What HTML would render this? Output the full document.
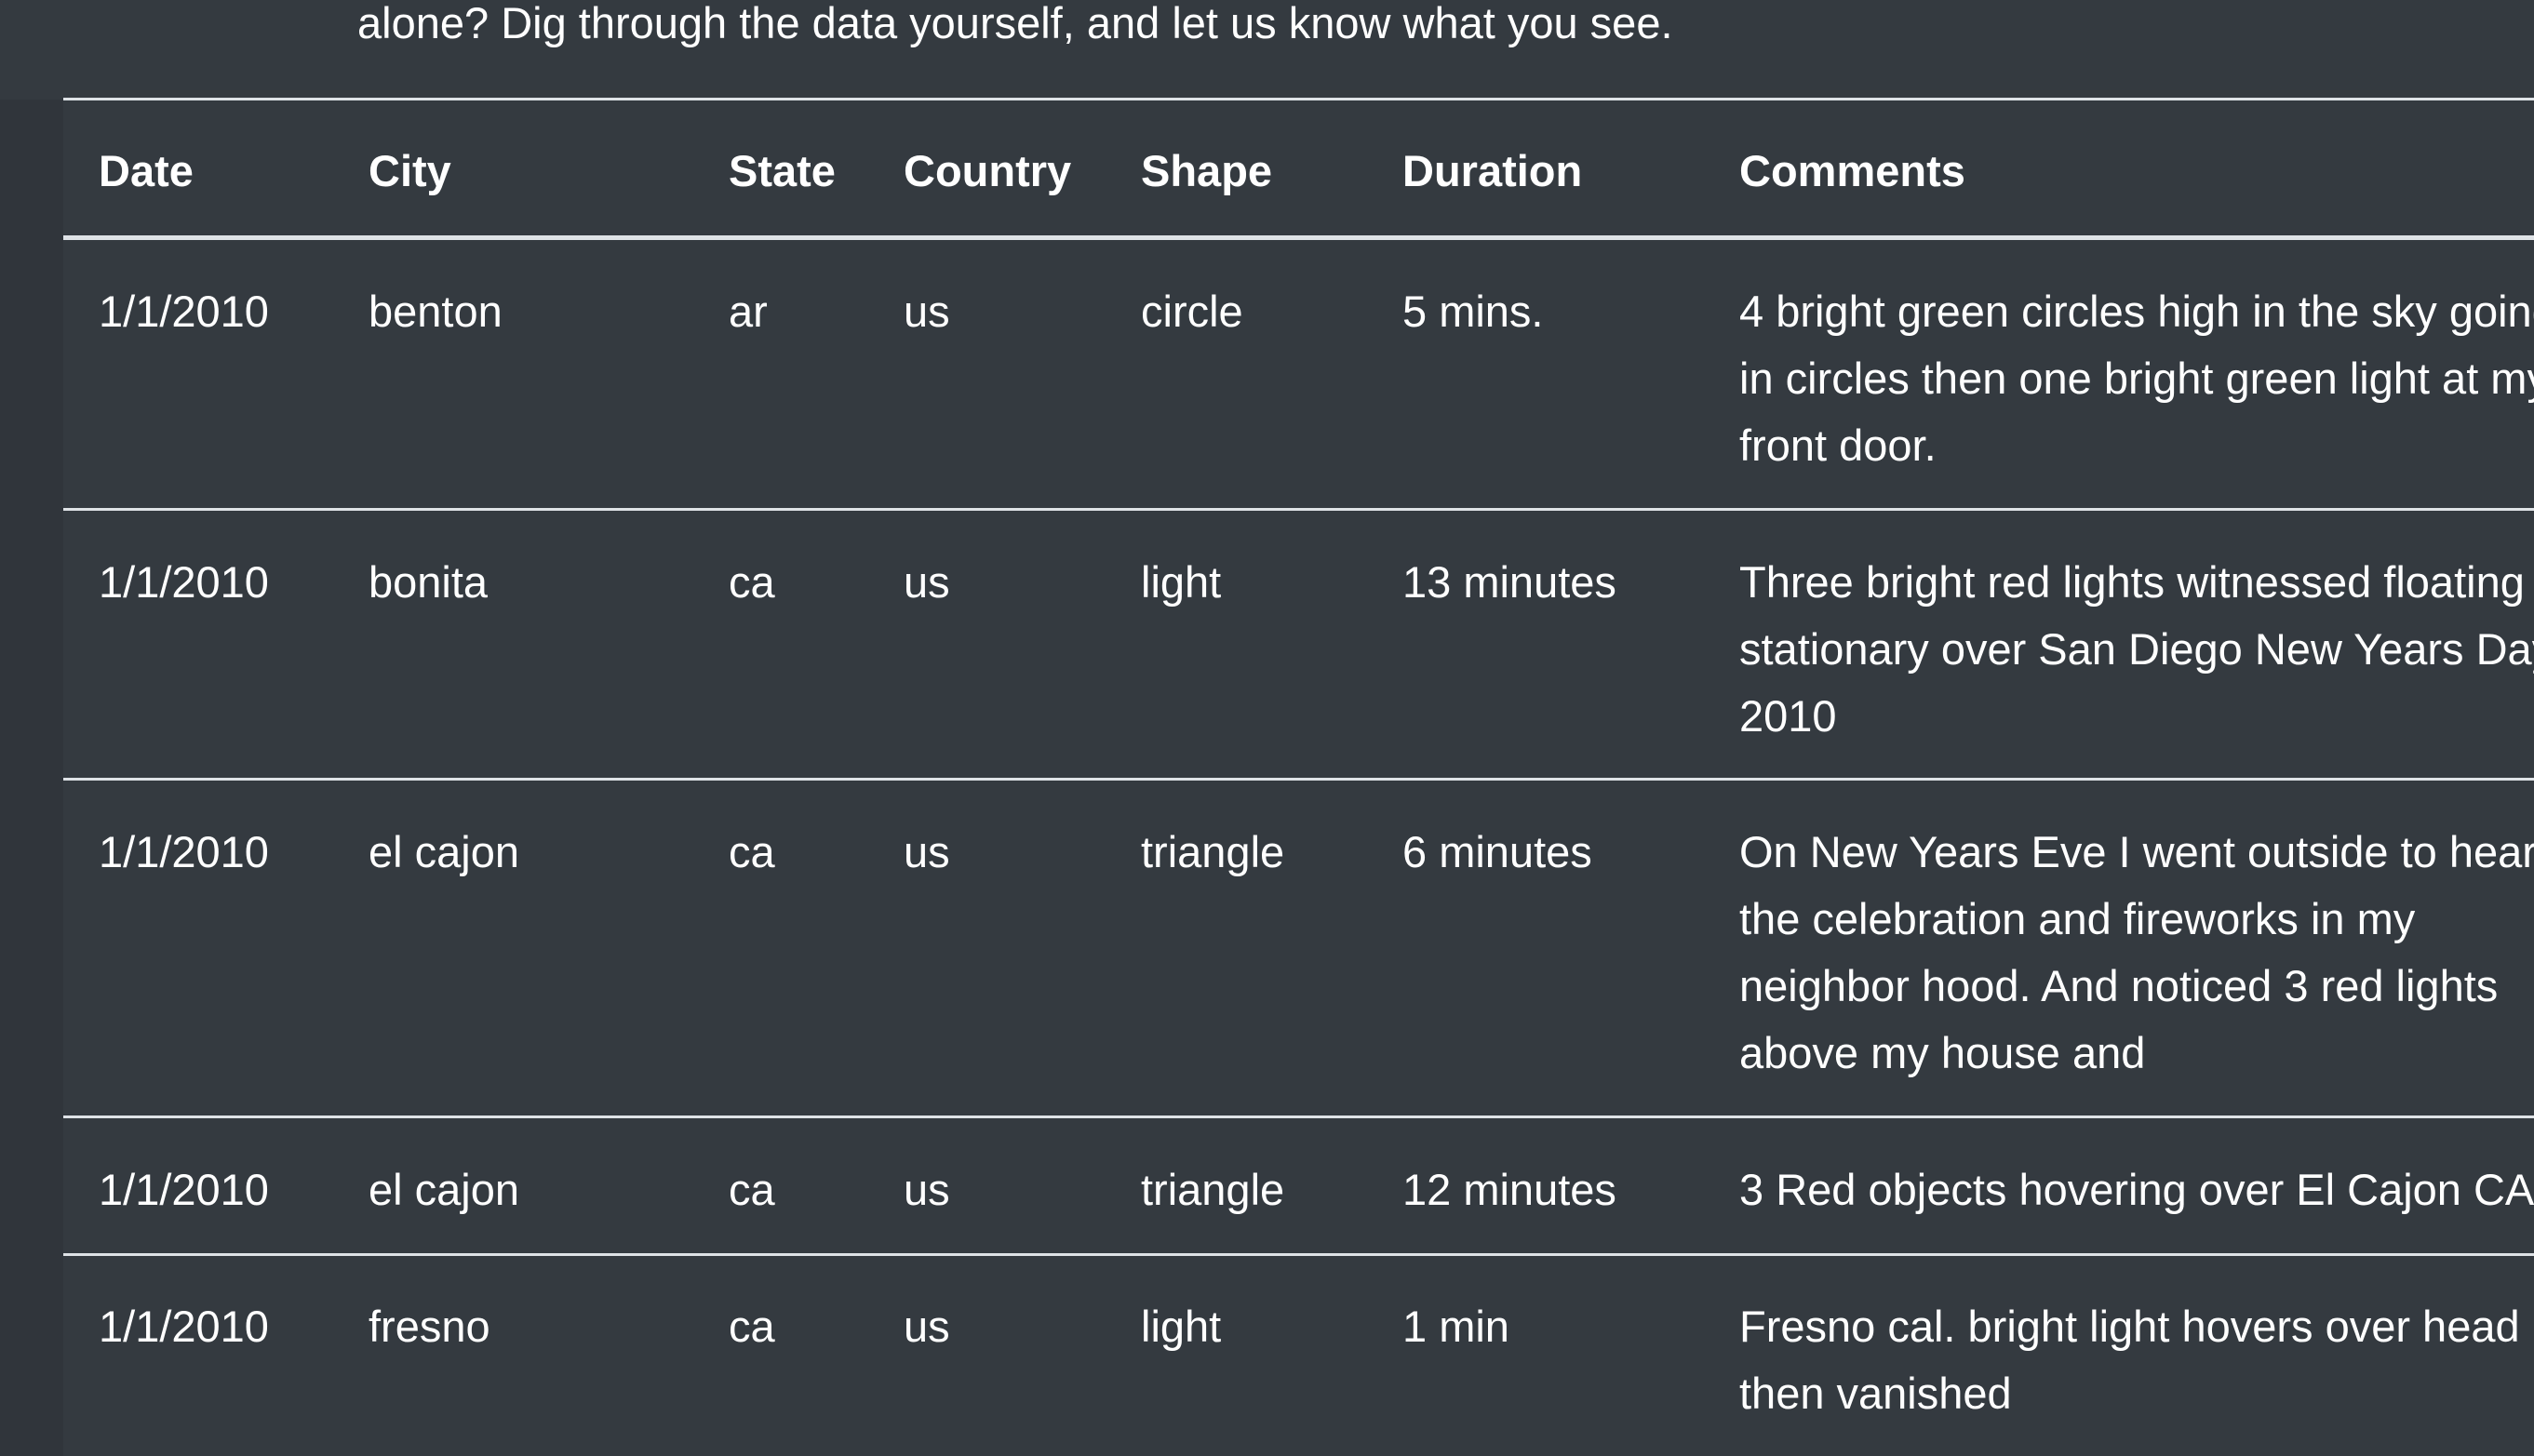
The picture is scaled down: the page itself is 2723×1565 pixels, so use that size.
<!DOCTYPE html>
<html><head><meta charset="utf-8"><style>
html,body{margin:0;padding:0}
body{width:2723px;height:1565px;overflow:hidden;background:#343a40;position:relative;font-family:"Liberation Sans",sans-serif;color:#fff;font-size:47px;line-height:72px}
.left{position:absolute;left:0;top:107px;width:68px;bottom:0;background:#30353b}
.ln{position:absolute;left:68px;right:0;height:3px;background:#dee2e6}
.t{position:absolute;white-space:nowrap}
.b{font-weight:bold}
</style></head><body>
<div class="left"></div>
<div class="t" style="left:384px;top:-11px">alone? Dig through the data yourself, and let us know what you see.</div>
<div class="ln" style="top:105px"></div>
<div class="ln" style="top:253px;height:5px"></div>
<div class="ln" style="top:546px"></div>
<div class="ln" style="top:836px"></div>
<div class="ln" style="top:1199px"></div>
<div class="ln" style="top:1347px"></div>

<div class="t b" style="top:148px;left:106px">Date</div>
<div class="t b" style="top:148px;left:396px">City</div>
<div class="t b" style="top:148px;left:783px">State</div>
<div class="t b" style="top:148px;left:971px">Country</div>
<div class="t b" style="top:148px;left:1226px">Shape</div>
<div class="t b" style="top:148px;left:1507px">Duration</div>
<div class="t b" style="top:148px;left:1869px">Comments</div>

<div class="t" style="top:299px;left:106px">1/1/2010</div>
<div class="t" style="top:299px;left:396px">benton</div>
<div class="t" style="top:299px;left:783px">ar</div>
<div class="t" style="top:299px;left:971px">us</div>
<div class="t" style="top:299px;left:1226px">circle</div>
<div class="t" style="top:299px;left:1507px">5 mins.</div>
<div class="t" style="top:299px;left:1869px">4 bright green circles high in the sky going<br>in circles then one bright green light at my<br>front door.</div>

<div class="t" style="top:590px;left:106px">1/1/2010</div>
<div class="t" style="top:590px;left:396px">bonita</div>
<div class="t" style="top:590px;left:783px">ca</div>
<div class="t" style="top:590px;left:971px">us</div>
<div class="t" style="top:590px;left:1226px">light</div>
<div class="t" style="top:590px;left:1507px">13 minutes</div>
<div class="t" style="top:590px;left:1869px">Three bright red lights witnessed floating<br>stationary over San Diego New Years Day<br>2010</div>

<div class="t" style="top:880px;left:106px">1/1/2010</div>
<div class="t" style="top:880px;left:396px">el cajon</div>
<div class="t" style="top:880px;left:783px">ca</div>
<div class="t" style="top:880px;left:971px">us</div>
<div class="t" style="top:880px;left:1226px">triangle</div>
<div class="t" style="top:880px;left:1507px">6 minutes</div>
<div class="t" style="top:880px;left:1869px">On New Years Eve I went outside to hear<br>the celebration and fireworks in my<br>neighbor hood. And noticed 3 red lights<br>above my house and</div>

<div class="t" style="top:1243px;left:106px">1/1/2010</div>
<div class="t" style="top:1243px;left:396px">el cajon</div>
<div class="t" style="top:1243px;left:783px">ca</div>
<div class="t" style="top:1243px;left:971px">us</div>
<div class="t" style="top:1243px;left:1226px">triangle</div>
<div class="t" style="top:1243px;left:1507px">12 minutes</div>
<div class="t" style="top:1243px;left:1869px">3 Red objects hovering over El Cajon CA</div>

<div class="t" style="top:1390px;left:106px">1/1/2010</div>
<div class="t" style="top:1390px;left:396px">fresno</div>
<div class="t" style="top:1390px;left:783px">ca</div>
<div class="t" style="top:1390px;left:971px">us</div>
<div class="t" style="top:1390px;left:1226px">light</div>
<div class="t" style="top:1390px;left:1507px">1 min</div>
<div class="t" style="top:1390px;left:1869px">Fresno cal. bright light hovers over head<br>then vanished</div>
</body></html>
